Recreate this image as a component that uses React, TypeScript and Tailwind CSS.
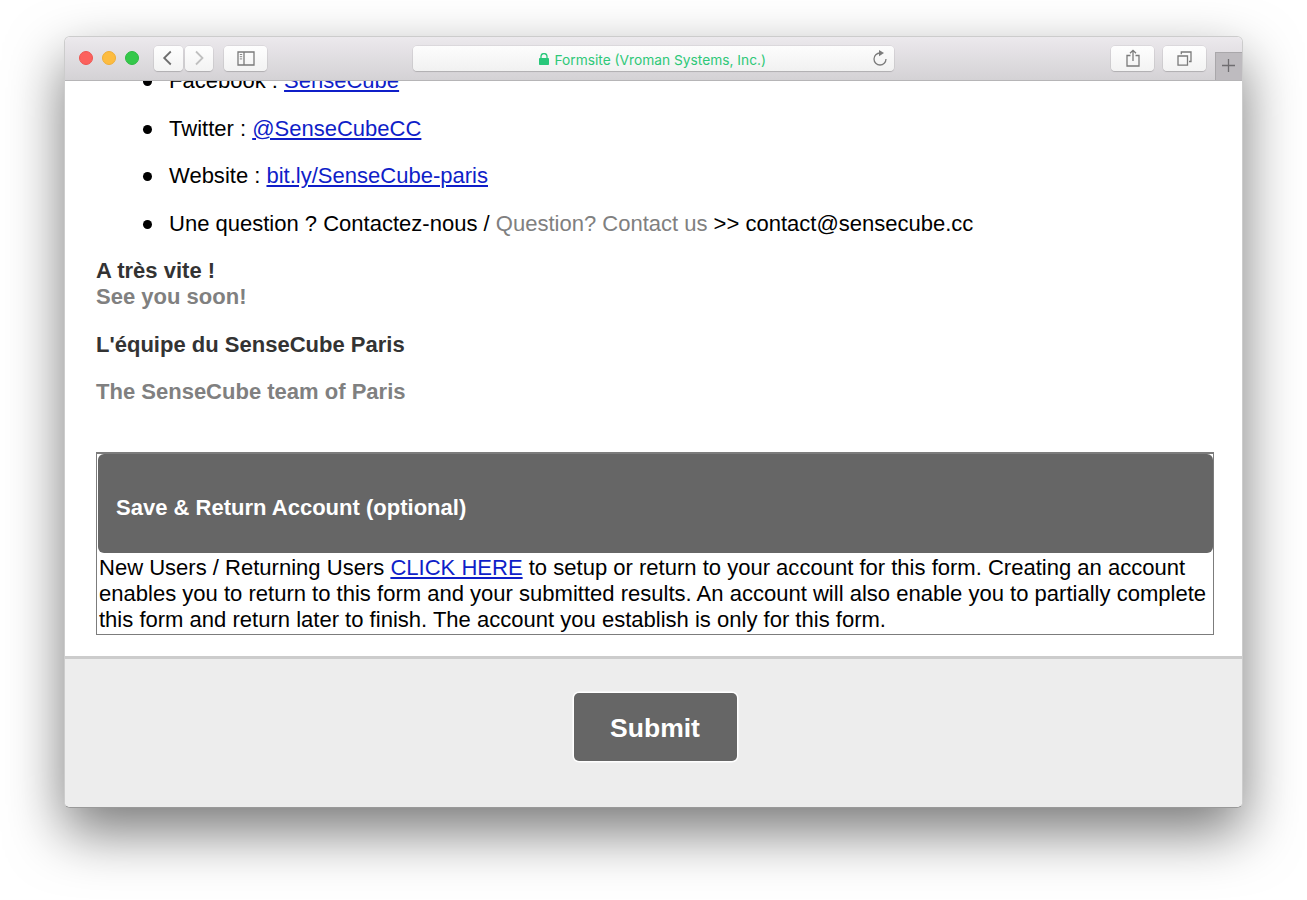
import type { ReactNode } from 'react'

const TrafficLights = () => (
  <div className="flex gap-[9px]">
    <span className="size-3.5 rounded-full bg-[#fc615d] border border-[#ee5551]"></span>
    <span className="size-3.5 rounded-full bg-[#fdbc40] border border-[#efae36]"></span>
    <span className="size-3.5 rounded-full bg-[#34c84a] border border-[#2dba42]"></span>
  </div>
)

const ToolbarButton = ({ className, children }: { className: string, children: ReactNode }) => (
  <button className={`h-[25px] shrink-0 flex items-center justify-center rounded-[4px] bg-linear-to-b from-[#fefefe] to-[#f3f3f3] text-[#7a7a7a] shadow-[0_0_0_0.5px_rgba(0,0,0,0.1),0_1px_1px_rgba(0,0,0,0.14)] ${className}`}>
    {children}
  </button>
)

const Toolbar = () => {
  return (
    <header className="h-[44px] shrink-0 flex items-start bg-linear-to-b from-[#ece9ed] to-[#d4d2d5] border-b-[1.5px] border-[#b6b5b7]">
      <div className="flex pt-[9px] pl-3.5">
        <div className="mt-[5px] mr-[15px]">
          <TrafficLights />
        </div>
        <ToolbarButton className="w-[29px] mr-[2px]">
          <svg width="12" height="16" viewBox="0 0 12 16" fill="none" stroke="#6e6e6e" strokeWidth="1.8" className="-mt-[1px] mr-[2px]">
            <path d="M8.8 1.5 L2.2 8 L8.8 14.5" />
          </svg>
        </ToolbarButton>
        <ToolbarButton className="w-[28px] mr-[11px]">
          <svg width="12" height="16" viewBox="0 0 12 16" fill="none" stroke="#c0c0c0" strokeWidth="1.8" className="-mt-[1px]">
            <path d="M3 1.5 L9.5 8 L3 14.5" />
          </svg>
        </ToolbarButton>
        <ToolbarButton className="w-[43px]">
          <svg width="18" height="15" viewBox="0 0 18 15" fill="none" stroke="currentColor" strokeWidth="1.3">
            <path d="M1 1 H17 V14 H1 Z M7 1 V14" />
            <path d="M2.8 3.5 H5.2 M2.8 5.7 H5.2 M2.8 7.9 H5.2" strokeWidth="0.9" />
          </svg>
        </ToolbarButton>
      </div>
      <div className="relative mt-[9px] ml-[146px] w-[481px] h-[25px] flex items-center justify-center rounded-[4px] bg-linear-to-b from-[#fdfdfd] to-[#f1f1f1] shadow-[0_0_0_0.5px_rgba(0,0,0,0.1),0_1px_1px_rgba(0,0,0,0.14)]">
        <svg width="10" height="12" viewBox="0 0 10 12" className="mr-[5.5px]">
          <path d="M2 6 V3.6 A3 3 0 0 1 8 3.6 V6" fill="none" stroke="#28c77a" strokeWidth="1.3" />
          <rect y="5" width="10" height="7" rx="0.8" fill="#28c77a" />
        </svg>
        <span className="font-[Inter,sans-serif] text-[13.75px] leading-[25px] text-[#2ec878] whitespace-nowrap mt-[3px] mr-[2px]">Formsite (Vroman Systems, Inc.)</span>
        <svg width="14" height="16" viewBox="0 0 14 16" fill="none" className="absolute right-[7px] top-[4px]">
          <path d="M8 3 H7 A6 6 0 1 0 13 9" stroke="#7b7b7b" strokeWidth="1.3" />
          <path d="M6 0 L11 3.1 L6 6.2 Z" fill="#7b7b7b" />
        </svg>
      </div>
      <div className="flex ml-auto pt-[9px]">
        <ToolbarButton className="w-[43px] mr-[9px]">
          <svg width="14" height="18" viewBox="0 0 14 18" fill="none" stroke="currentColor" strokeWidth="1.3" className="-mt-[1px]">
            <path d="M4.5 6.5 H1 V17 H13 V6.5 H9.5 M7 12 V1.5 M4 4.3 L7 1.3 L10 4.3" />
          </svg>
        </ToolbarButton>
        <ToolbarButton className="w-[43px] mr-[9px]">
          <svg width="15" height="15" viewBox="0 0 15 15" fill="none" stroke="currentColor" strokeWidth="1.3">
            <path d="M1 5 H10.5 V14.2 H1 Z M4.3 3.3 V1 H14 V10.5 H12" />
          </svg>
        </ToolbarButton>
      </div>
      <button className="w-[27px] h-[28px] mt-[15px] shrink-0 flex items-center justify-center bg-[#bebbbf] border-t border-l border-[#a9a7aa]">
        <svg width="13" height="13" viewBox="0 0 13 13" stroke="#6f6d70" strokeWidth="1.3" className="mr-[1px] mb-[2px]">
          <path d="M6.5 0 V13 M0 6.5 H13" />
        </svg>
      </button>
    </header>
  )
}

const Link = ({ children }: { children: ReactNode }) => (
  <a href="#" className="text-[#0f1ec8] underline decoration-[1.5px] underline-offset-[1.5px]">{children}</a>
)

const Contact = ({ children }: { children: ReactNode }) => (
  <li className="flex items-center">
    <span className="size-[9px] rounded-full bg-black mr-[17px] mt-[1.5px]"></span>
    <span>{children}</span>
  </li>
)

const SaveAccount = () => {
  return (
    <section className="mt-[47px] w-[1118px] h-[183px] border border-t-2 border-[#7c7c7c]">
      <h2 className="h-[99px] ml-[0.5px] pl-[18.5px] pt-[9px] flex items-center rounded-[6px] bg-[#666666] text-white font-bold">Save &amp; Return Account (optional)</h2>
      <p className="pl-[2px] pt-[2px] whitespace-nowrap text-[22.04px]">
        New Users / Returning Users <Link>CLICK HERE</Link> to setup or return to your account for this form. Creating an account
        <br />
        enables you to return to this form and your submitted results. An account will also enable you to partially complete
        <br />
        this form and return later to finish. The account you establish is only for this form.
      </p>
    </section>
  )
}

const App = () => {
  return (
    <main className="w-[1307px] h-[900px] bg-white overflow-hidden pt-[36px] pl-[64px]">
      <div className="w-[1179px] h-[772px] flex flex-col rounded-[6px] overflow-hidden border border-black/20 border-b-black/40 bg-clip-padding shadow-[0_24px_56px_rgba(0,0,0,0.53)]">
        <Toolbar />
        <div className="h-[575px] shrink-0 overflow-hidden bg-white pl-[31px] font-['Liberation_Sans',Arial,sans-serif] text-[22.02px] leading-[26px] text-black">
          <ul className="-mt-[13px] ml-[47px] flex flex-col gap-[21.5px]">
            <Contact>Facebook : <Link>SenseCube</Link></Contact>
            <Contact>Twitter : <Link>@SenseCubeCC</Link></Contact>
            <Contact>Website : <Link>bit.ly/SenseCube-paris</Link></Contact>
            <Contact>Une question ? Contactez-nous / <span className="text-[#808080]">Question? Contact us</span> &gt;&gt; contact@sensecube.cc</Contact>
          </ul>
          <div className="mt-[21.5px] font-bold text-[#333333]">
            <p>A très vite !</p>
            <p className="text-[#808080]">See you soon!</p>
            <p className="mt-[21.5px]">L'équipe du SenseCube Paris</p>
            <p className="mt-[21.5px] text-[#808080]">The SenseCube team of Paris</p>
          </div>
          <SaveAccount />
        </div>
        <footer className="flex-1 flex justify-center items-start pt-[34px] pl-[3px] bg-[#ededed] border-t-[3.5px] border-[#cccccc]">
          <button className="w-[163px] h-[68px] pt-[3px] rounded-[5px] ring-[1.5px] ring-white bg-[#666666] text-white font-bold text-[26.5px] font-['Liberation_Sans',Arial,sans-serif]">Submit</button>
        </footer>
      </div>
    </main>
  )
}

export default App
